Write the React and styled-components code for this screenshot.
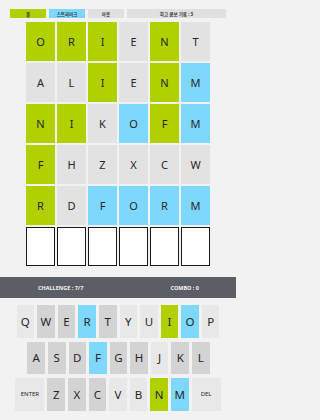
import styled, { createGlobalStyle } from 'styled-components'

const GlobalStyle = createGlobalStyle`
  html, body {
    margin: 0;
    padding: 0;
    background: #f2f2f2;
  }
  body {
    font-family: "Noto Sans", "Noto Sans CJK KR", sans-serif;
  }
`

const COLORS = {
  ball: '#b1d000',
  strike: '#7ed8fd',
  out: '#e2e2e2',
  empty: '#ffffff',
}

const KEY_COLORS = {
  ball: '#b1d000',
  strike: '#7ed8fd',
  used: '#d3d3d3',
  fresh: '#e8e8e8',
}

const Page = styled.div`
  width: 236px;
  height: 420px;
  display: flex;
  flex-direction: column;
  background: #f2f2f2;
`

const Legend = styled.div`
  display: flex;
  gap: 3px;
  padding: 9px 10px 0;
`

const Chip = styled.div`
  width: ${({ $wide }) => ($wide ? '99px' : '36px')};
  height: 9px;
  background: ${({ $bg }) => $bg};
  color: #333;
  font-size: 4.5px;
  font-weight: 700;
  display: flex;
  align-items: center;
  justify-content: center;
`

const Board = styled.div`
  display: grid;
  grid-template-columns: repeat(6, 29px);
  grid-auto-rows: 39px;
  gap: 2px;
  margin: 4px 0 0 26px;
`

const Cell = styled.div`
  background: ${({ $state }) => COLORS[$state]};
  border: ${({ $state }) => ($state === 'empty' ? '1px solid #1a1a1a' : 'none')};
  box-sizing: border-box;
  color: #262626;
  font-size: 11px;
  display: flex;
  align-items: center;
  justify-content: center;
`

const StatusBar = styled.div`
  margin-top: 11px;
  height: 21px;
  padding: 0 37px 0 38px;
  background: #5b5e64;
  display: flex;
  align-items: center;
  justify-content: space-between;
  color: #f4f4f4;
  font-size: 5.5px;
  font-weight: 700;
`

const Stat = styled.div`
  white-space: nowrap;
`

const Keyboard = styled.div`
  display: flex;
  flex-direction: column;
  align-items: center;
  gap: 4px;
  margin-top: 7px;
`

const KeyRow = styled.div`
  display: flex;
  gap: 3px;
  margin-left: ${({ $offset }) => $offset || 0}px;
`

const Key = styled.div`
  width: ${({ $wide }) => ($wide ? '29px' : '17.6px')};
  height: 32.5px;
  background: ${({ $state }) => KEY_COLORS[$state]};
  color: #262626;
  font-size: ${({ $wide }) => ($wide ? '6px' : '11.5px')};
  display: flex;
  align-items: center;
  justify-content: center;
`

const guesses = [
  [['O', 'ball'], ['R', 'ball'], ['I', 'ball'], ['E', 'out'], ['N', 'ball'], ['T', 'out']],
  [['A', 'out'], ['L', 'out'], ['I', 'ball'], ['E', 'out'], ['N', 'ball'], ['M', 'strike']],
  [['N', 'ball'], ['I', 'ball'], ['K', 'out'], ['O', 'strike'], ['F', 'ball'], ['M', 'strike']],
  [['F', 'ball'], ['H', 'out'], ['Z', 'out'], ['X', 'out'], ['C', 'out'], ['W', 'out']],
  [['R', 'ball'], ['D', 'out'], ['F', 'strike'], ['O', 'strike'], ['R', 'strike'], ['M', 'strike']],
  [['', 'empty'], ['', 'empty'], ['', 'empty'], ['', 'empty'], ['', 'empty'], ['', 'empty']],
]

const keyState = {
  R: 'strike', O: 'strike', F: 'strike', M: 'strike',
  I: 'ball', N: 'ball',
  W: 'used', E: 'used', T: 'used',
  A: 'used', S: 'used', D: 'used', G: 'used', H: 'used', K: 'used', L: 'used',
  Z: 'used', X: 'used', C: 'used',
}

const rows = [
  ['Q', 'W', 'E', 'R', 'T', 'Y', 'U', 'I', 'O', 'P'],
  ['A', 'S', 'D', 'F', 'G', 'H', 'J', 'K', 'L'],
  ['ENTER', 'Z', 'X', 'C', 'V', 'B', 'N', 'M', 'DEL'],
]

export default function App() {
  return (
    <Page>
      <GlobalStyle />
      <Legend>
        <Chip $bg={COLORS.ball}>볼</Chip>
        <Chip $bg={COLORS.strike}>스트라이크</Chip>
        <Chip $bg="#e0e0e0">아웃</Chip>
        <Chip $bg="#e0e0e0" $wide>최고 콤보 기록 : 3</Chip>
      </Legend>

      <Board>
        {guesses.flat().map(([ch, state], i) => (
          <Cell key={i} $state={state}>{ch}</Cell>
        ))}
      </Board>

      <StatusBar>
        <Stat>CHALLENGE : 7/7</Stat>
        <Stat>COMBO : 0</Stat>
      </StatusBar>

      <Keyboard>
        {rows.map((row, r) => (
          <KeyRow key={r} $offset={r === 1 ? 1 : 0}>
            {row.map((k) => {
              const wide = k.length > 1
              return (
                <Key key={k} $wide={wide} $state={keyState[k] || 'fresh'}>
                  {k}
                </Key>
              )
            })}
          </KeyRow>
        ))}
      </Keyboard>
    </Page>
  )
}
